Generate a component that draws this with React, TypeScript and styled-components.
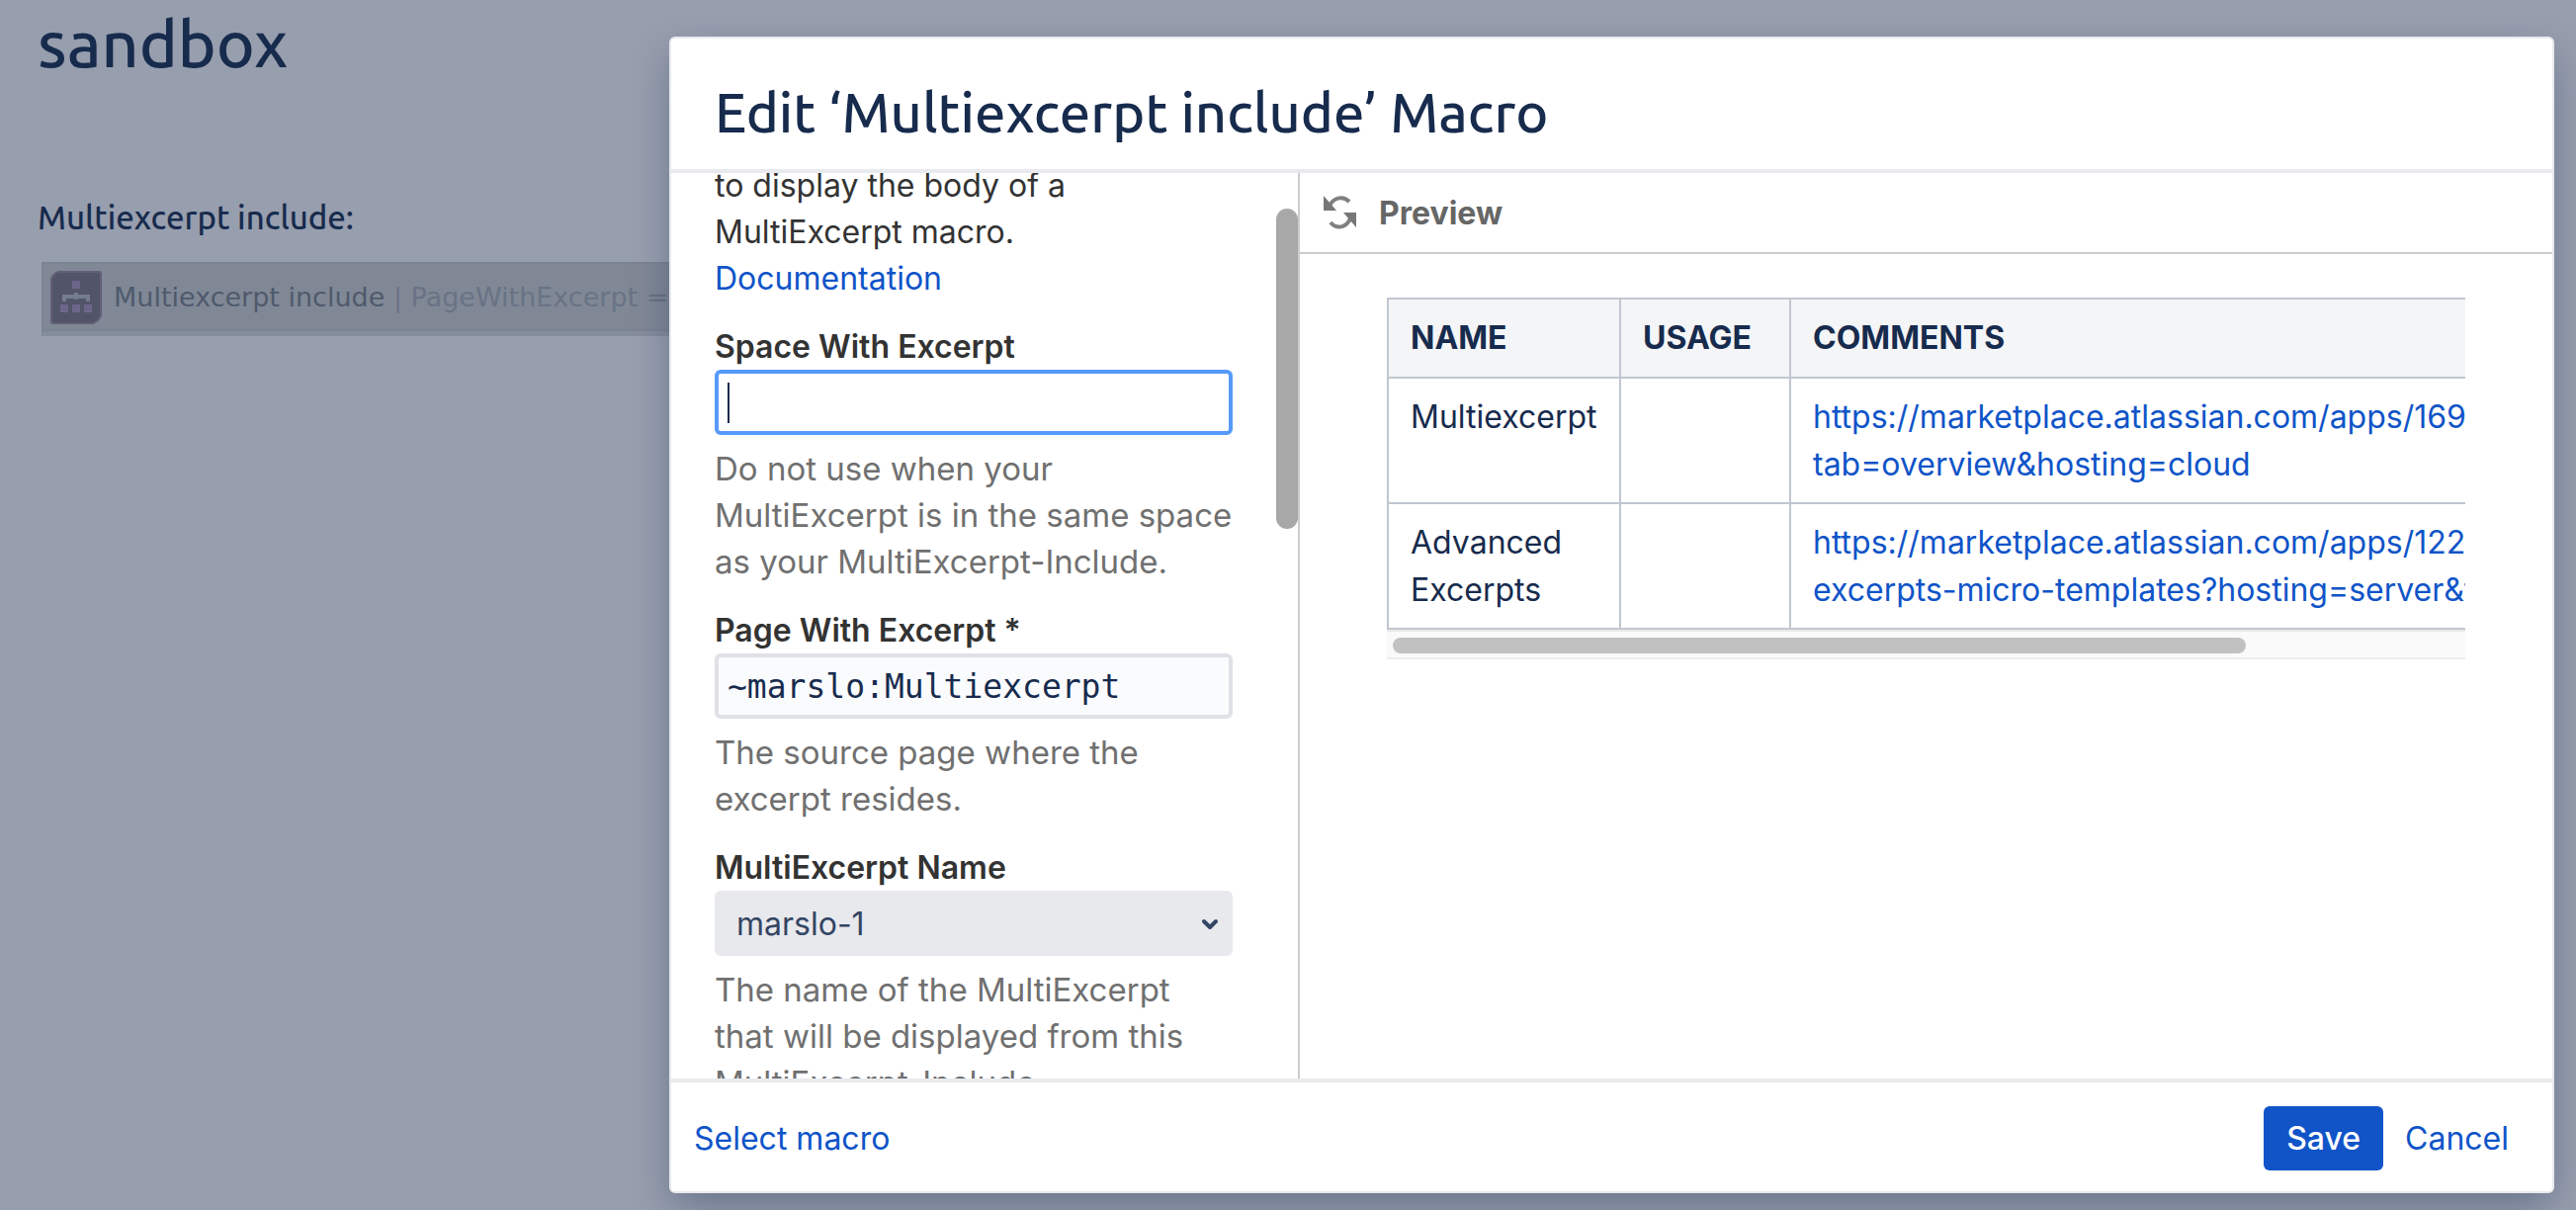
import React, { useLayoutEffect, useRef } from 'react';
import styled, { createGlobalStyle } from 'styled-components';

const uiFont = `Inter, 'Liberation Sans', sans-serif`;
const headingFont = `Ubuntu, 'Noto Sans', sans-serif`;

const GlobalStyle = createGlobalStyle`
  *, *::before, *::after { box-sizing: border-box; }
  body {
    margin: 0;
    background: #979eae;
    font: 400 32px/47px ${uiFont};
    color: #172b4d;
  }
  h1, h2, h3, p { margin: 0; }
  a { color: #0f54c8; text-decoration: none; }
  button, input, select { font: inherit; }
`;

const Stage = styled.div`
  display: grid;
  grid-template-columns: minmax(0, 1fr);
  min-height: 100vh;
  overflow: hidden;
`;

const EditorPage = styled.main`
  grid-area: 1 / 1;
  padding-left: 38px;
  font-family: ${headingFont};
`;

const PageTitle = styled.h1`
  font-size: 66px;
  font-weight: 500;
  line-height: 86px;
`;

const SectionTitle = styled.h2`
  padding: 110px 0 21px;
  font-size: 33px;
  font-weight: 500;
  line-height: 48px;
`;

const MacroPlaceholder = styled.div`
  display: flex;
  align-items: center;
  gap: 12px;
  width: 60%;
  height: 75px;
  margin-left: 4px;
  padding: 0 7px;
  border: 2px solid #7b8493;
  border-bottom: 5px solid #858d9d;
  background: #808896;
  box-shadow: inset 0 -2px #7b8493;
  font: 27px/40px 'DejaVu Sans', sans-serif;
  color: #4f5a6c;
  white-space: nowrap;
`;

const MacroParams = styled.span`
  color: #697385;
`;

const Overlay = styled.div`
  grid-area: 1 / 1;
  z-index: 1;
  display: flex;
  height: 100vh;
  padding: 37px 22px 17px 677px;
`;

const Dialog = styled.section`
  flex: 1;
  min-width: 0;
  display: flex;
  flex-direction: column;
  border: 2px solid #e9eaee;
  border-radius: 6px;
  background: #fff;
  box-shadow: 0 16px 40px -4px rgba(9, 30, 66, 0.34);
`;

const DialogHeader = styled.header`
  padding: 43px 44px 25px;
  border-bottom: 4px solid #e9eaee;
`;

const DialogTitle = styled.h2`
  font: 500 56px/64px ${headingFont};
`;

const DialogBody = styled.div`
  flex: 1;
  min-height: 0;
  display: flex;
`;

const FormPane = styled.div`
  flex: none;
  width: 634px;
  display: flex;
`;

const FormScroller = styled.form`
  flex: 1;
  overflow: hidden;
  padding: 0 44px;
  color: #333;
`;

const VerticalBar = styled.div`
  width: 22px;
  padding-top: 36px;
`;

const VerticalThumb = styled.div`
  height: 324px;
  border-radius: 11px;
  background: #a8a8a8;
`;

const Intro = styled.p`
  width: 460px;
`;

const Field = styled.div`
  width: 524px;
  padding-top: 22px;
`;

const FieldLabel = styled.label`
  display: block;
  font-weight: 600;
`;

const Hint = styled.p`
  padding-top: 11px;
  font-size: 33px;
  color: #707070;
`;

const InputWrap = styled.div`
  position: relative;
  display: flex;
`;

const TextInput = styled.input<{ $active?: boolean }>`
  width: 100%;
  height: 66px;
  padding: 0 9px;
  border: 4px solid ${(p) => (p.$active ? '#579afc' : '#dfe1e6')};
  border-radius: 6px;
  outline: none;
  background: ${(p) => (p.$active ? '#fff' : '#fafbfd')};
  color: #172b4d;
  font: 33px/47px 'DejaVu Sans Mono', monospace;
`;

const Caret = styled.span`
  position: absolute;
  left: 13px;
  top: 13px;
  width: 2px;
  height: 41px;
  background: #172b4d;
`;

const Select = styled.select`
  appearance: none;
  width: 100%;
  height: 66px;
  padding: 0 48px 0 22px;
  border: 0;
  border-radius: 6px;
  background: #e8e9ed;
  color: #344563;
`;

const SelectArrow = styled.svg`
  position: absolute;
  right: 14px;
  top: 28px;
  pointer-events: none;
`;

const PreviewPane = styled.div`
  flex: 1;
  min-width: 0;
  border-left: 2px solid #ccc;
`;

const PreviewHeader = styled.div`
  display: flex;
  align-items: center;
  gap: 22px;
  height: 82px;
  padding: 0 24px;
  border-bottom: 2px solid #ccc;
  color: #666;
`;

const PreviewTitle = styled.h3`
  font-size: 32px;
  font-weight: 700;
`;

const PreviewContent = styled.div`
  padding: 44px 88px;
`;

const TableViewport = styled.div`
  overflow: hidden;
`;

const Table = styled.table`
  width: 1369px;
  table-layout: fixed;
  border-collapse: separate;
  border-spacing: 0;
  border-top: 2px solid #c1c7d0;
  border-left: 2px solid #c1c7d0;
  line-height: 48px;
  text-align: left;
`;

const Col = styled.col<{ $width?: number }>`
  width: ${(p) => (p.$width ? `${p.$width}px` : 'auto')};
`;

const HeadCell = styled.th`
  padding: 15px 22px;
  border-right: 2px solid #c1c7d0;
  border-bottom: 2px solid #c1c7d0;
  background: #f4f5f7;
  font-weight: 700;
`;

const Cell = styled.td`
  padding: 15px 22px 14px;
  border-right: 2px solid #c1c7d0;
  border-bottom: 2px solid #c1c7d0;
  vertical-align: top;
`;

const HorizontalBar = styled.div`
  height: 30px;
  padding: 6px 6px 0;
  border-top: 2px solid #e8e8e8;
  border-bottom: 2px solid #ededed;
  background: #fafafa;
`;

const HorizontalThumb = styled.div`
  width: 80%;
  height: 16px;
  border-radius: 8px;
  background: #c1c1c1;
`;

const DialogFooter = styled.footer`
  display: flex;
  align-items: center;
  height: 114px;
  padding: 2px 44px 0 23px;
  border-top: 4px solid #e9eaee;
`;

const LinkButton = styled.button`
  padding: 0;
  border: 0;
  background: none;
  color: #0f54c8;
`;

const SaveButton = styled.button`
  height: 65px;
  margin: 0 22px 0 auto;
  padding: 0 23px;
  border: 0;
  border-radius: 6px;
  background: #1054c8;
  color: #fff;
  font-weight: 500;
`;

const MacroIcon = () => (
  <svg width="52" height="54" viewBox="0 0 52 54" aria-hidden="true">
    <path d="M8 1H49Q51 1 51 3V45Q49 51 43 53H3Q1 53 1 51V8Q3 3 8 1Z" fill="#525468" stroke="#625f78" strokeWidth="2" />
    <path d="M26 22V29M14 31V26H38V31" fill="none" stroke="#747d8f" strokeWidth="4" />
    <path d="M22 10H30V18H22ZM10 34H18V42H10ZM22 34H30V42H22ZM34 34H42V42H34Z" fill="#6d668b" />
  </svg>
);

const RefreshIcon = () => (
  <svg width="34" height="36" viewBox="0 0 34 36" aria-hidden="true">
    <path d="M26 7C20 1 11 2 6 11M7 28C13 35 23 34 27 24" fill="none" stroke="#808080" strokeWidth="4" />
    <path d="M0 1V16H13ZM33 18V33L20 18Z" fill="#777" />
  </svg>
);

const rows = [
  {
    name: 'Multiexcerpt',
    lines: ['https://marketplace.atlassian.com/apps/169/multiexcerpt?', 'tab=overview&hosting=cloud'],
  },
  {
    name: 'Advanced Excerpts',
    lines: ['https://marketplace.atlassian.com/apps/122/advanced-', 'excerpts-micro-templates?hosting=server&tab=overview'],
  },
];

export default function App() {
  const scroller = useRef<HTMLFormElement>(null);

  useLayoutEffect(() => {
    if (scroller.current) scroller.current.scrollTop = 11;
  }, []);

  return (
    <>
      <GlobalStyle />
      <Stage>
        <EditorPage>
          <PageTitle>sandbox</PageTitle>
          <SectionTitle>Multiexcerpt include:</SectionTitle>
          <MacroPlaceholder>
            <MacroIcon />
            <span>
              Multiexcerpt include <MacroParams>| PageWithExcerpt =</MacroParams>
            </span>
          </MacroPlaceholder>
        </EditorPage>
        <Overlay>
          <Dialog role="dialog" aria-labelledby="dialog-title">
            <DialogHeader>
              <DialogTitle id="dialog-title">Edit ‘Multiexcerpt include’ Macro</DialogTitle>
            </DialogHeader>
            <DialogBody>
              <FormPane>
                <FormScroller ref={scroller}>
                  <Intro>
                    to display the body of a MultiExcerpt macro.
                    <br />
                    <a href="#documentation">Documentation</a>
                  </Intro>
                  <Field>
                    <FieldLabel htmlFor="space">Space With Excerpt</FieldLabel>
                    <InputWrap>
                      <TextInput id="space" type="text" $active />
                      <Caret />
                    </InputWrap>
                    <Hint>
                      Do not use when your MultiExcerpt is in the same space as your MultiExcerpt-Include.
                    </Hint>
                  </Field>
                  <Field>
                    <FieldLabel htmlFor="page">Page With Excerpt *</FieldLabel>
                    <InputWrap>
                      <TextInput id="page" type="text" defaultValue="~marslo:Multiexcerpt" />
                    </InputWrap>
                    <Hint>The source page where the excerpt resides.</Hint>
                  </Field>
                  <Field>
                    <FieldLabel htmlFor="name">MultiExcerpt Name</FieldLabel>
                    <InputWrap>
                      <Select id="name" defaultValue="marslo-1">
                        <option>marslo-1</option>
                      </Select>
                      <SelectArrow width="18" height="14" viewBox="0 0 18 14" aria-hidden="true">
                        <path d="M3 3L9 9L15 3" fill="none" stroke="#344563" strokeWidth="4" strokeLinecap="round" strokeLinejoin="round" />
                      </SelectArrow>
                    </InputWrap>
                    <Hint>
                      The name of the MultiExcerpt that will be displayed from this MultiExcerpt-Include.
                    </Hint>
                  </Field>
                </FormScroller>
                <VerticalBar>
                  <VerticalThumb />
                </VerticalBar>
              </FormPane>
              <PreviewPane>
                <PreviewHeader>
                  <RefreshIcon />
                  <PreviewTitle>Preview</PreviewTitle>
                </PreviewHeader>
                <PreviewContent>
                  <TableViewport>
                    <Table>
                      <colgroup>
                        <Col $width={235} />
                        <Col $width={172} />
                        <Col />
                      </colgroup>
                      <thead>
                        <tr>
                          <HeadCell>NAME</HeadCell>
                          <HeadCell>USAGE</HeadCell>
                          <HeadCell>COMMENTS</HeadCell>
                        </tr>
                      </thead>
                      <tbody>
                        {rows.map((row) => (
                          <tr key={row.name}>
                            <Cell>{row.name}</Cell>
                            <Cell />
                            <Cell>
                              <a href="#marketplace">
                                {row.lines[0]}
                                <br />
                                {row.lines[1]}
                              </a>
                            </Cell>
                          </tr>
                        ))}
                      </tbody>
                    </Table>
                  </TableViewport>
                  <HorizontalBar>
                    <HorizontalThumb />
                  </HorizontalBar>
                </PreviewContent>
              </PreviewPane>
            </DialogBody>
            <DialogFooter>
              <LinkButton type="button">Select macro</LinkButton>
              <SaveButton type="button">Save</SaveButton>
              <LinkButton type="button">Cancel</LinkButton>
            </DialogFooter>
          </Dialog>
        </Overlay>
      </Stage>
    </>
  );
}
